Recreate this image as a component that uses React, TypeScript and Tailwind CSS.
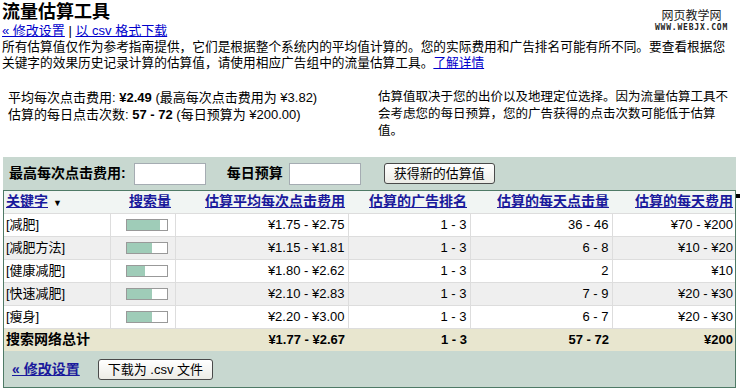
import React from "react";

const FONT = { fontFamily: '"Liberation Sans", "Noto Sans CJK SC", sans-serif' };

const ROWS = [
  { kw: "[减肥]", vol: 33, cpc: "¥1.75 - ¥2.75", pos: "1 - 3", clicks: "36 - 46", cost: "¥70 - ¥200" },
  { kw: "[减肥方法]", vol: 25, cpc: "¥1.15 - ¥1.81", pos: "1 - 3", clicks: "6 - 8", cost: "¥10 - ¥20" },
  { kw: "[健康减肥]", vol: 18, cpc: "¥1.80 - ¥2.62", pos: "1 - 3", clicks: "2", cost: "¥10" },
  { kw: "[快速减肥]", vol: 25, cpc: "¥2.10 - ¥2.83", pos: "1 - 3", clicks: "7 - 9", cost: "¥20 - ¥30" },
  { kw: "[瘦身]", vol: 25, cpc: "¥2.20 - ¥3.00", pos: "1 - 3", clicks: "6 - 7", cost: "¥20 - ¥30" },
];

function Btn({ children }: { children: React.ReactNode }) {
  return (
    <button className="h-[21px] px-[9px] rounded-[3px] border border-[#4a4a4a] bg-gradient-to-b from-white to-[#ecece6] text-[13px] leading-none text-black">
      {children}
    </button>
  );
}

export default function App() {
  return (
    <div className="relative w-[741px] h-[391px] bg-white text-black text-[13px] overflow-hidden px-[2px]" style={FONT}>
      {/* watermark */}
      <div className="absolute right-[13px] top-[9px] flex flex-col items-center">
        <div className="text-[12px] leading-[14px] text-[#222]">网页教学网</div>
        <div className="text-[8px] leading-[9px] font-bold tracking-[0.8px] text-[#222]" style={{ fontFamily: '"DejaVu Sans Mono", monospace' }}>
          WWW.WEBJX.COM
        </div>
      </div>

      <h1 className="mt-[1px] text-[18px] leading-[22px] font-bold">流量估算工具</h1>
      <div className="leading-[16px]">
        <a className="text-[#0000cc] underline">« 修改设置</a> | <a className="text-[#0000cc] underline">以 csv 格式下载</a>
      </div>
      <p className="leading-[16px] whitespace-nowrap text-[12.7px]">
        所有估算值仅作为参考指南提供，它们是根据整个系统内的平均值计算的。您的实际费用和广告排名可能有所不同。要查看根据您
        <br />
        关键字的效果历史记录计算的估算值，请使用相应广告组中的流量估算工具。<a className="text-[#0000cc] underline">了解详情</a>
      </p>

      <div className="mt-[18px] grid grid-cols-[376px_1fr] leading-[17px]">
        <div className="pl-[6px]">
          <div>
            平均每次点击费用: <b>¥2.49</b> (最高每次点击费用为 ¥3.82)
          </div>
          <div>
            估算的每日点击次数: <b>57 - 72</b> (每日预算为 ¥200.00)
          </div>
        </div>
        <div className="whitespace-nowrap text-[12.5px]">
          估算值取决于您的出价以及地理定位选择。因为流量估算工具不
          <br />
          会考虑您的每日预算，您的广告获得的点击次数可能低于估算
          <br />
          值。
        </div>
      </div>

      <div className="relative mt-[17px] ml-[1px] w-[733px] bg-[#c8d8d0]">
        <div className="absolute -right-[4px] top-[37px] w-[4px] h-[4px] bg-black" />
        <div className="h-[33px] flex items-center pl-[6px] font-bold text-[14px]">
          <span>最高每次点击费用:</span>
          <input className="ml-[8px] w-[72px] h-[22px] bg-white border border-[#a5acb2]" />
          <span className="ml-[21px]">每日预算</span>
          <input className="ml-[6px] w-[72px] h-[22px] bg-white border border-[#a5acb2]" />
          <span className="ml-[23px] font-normal">
            <Btn>获得新的估算值</Btn>
          </span>
        </div>
        <div className="border border-[#4f7a66]">
          <table className="w-full border-collapse">
            <thead>
              <tr className="h-[22px] bg-[#f1f5f3] text-[14px] font-bold text-[#1a1a9c]">
                <th className="px-[2px] text-left w-[106px] font-bold">
                  <span className="underline">关键字</span>
                  <span className="ml-[5px] text-[9px] text-black no-underline">▼</span>
                </th>
                <th className="px-[4px] text-right w-[65px] underline">搜索量</th>
                <th className="px-[3px] text-right w-[173px] underline">估算平均每次点击费用</th>
                <th className="px-[3px] text-right w-[122px] underline">估算的广告排名</th>
                <th className="px-[3px] text-right w-[142px] underline">估算的每天点击量</th>
                <th className="px-[2px] text-right underline">估算的每天费用</th>
              </tr>
            </thead>
            <tbody>
              {ROWS.map((r, i) => (
                <tr key={r.kw} className={`h-[23px] border-t border-[#dddddd] ${i % 2 === 1 ? "bg-[#efefef]" : "bg-white"}`}>
                  <td className="px-[2px] border-r border-[#dddddd]">{r.kw}</td>
                  <td className="px-[0px] border-r border-[#dddddd]">
                    <div className="ml-[15px] w-[42px] h-[12px] border border-[#999999] bg-white">
                      <div className="h-full bg-[#9fccb8]" style={{ width: r.vol }} />
                    </div>
                  </td>
                  <td className="px-[3px] text-right border-r border-[#dddddd]">{r.cpc}</td>
                  <td className="px-[3px] text-right border-r border-[#dddddd]">{r.pos}</td>
                  <td className="px-[3px] text-right border-r border-[#dddddd]">{r.clicks}</td>
                  <td className="px-[2px] text-right">{r.cost}</td>
                </tr>
              ))}
              <tr className="h-[23px] bg-[#e8e6cf] font-bold border-t border-[#dddddd]">
                <td className="px-[2px] text-[14px]" colSpan={2}>搜索网络总计</td>
                <td className="px-[3px] text-right">¥1.77 - ¥2.67</td>
                <td className="px-[3px] text-right">1 - 3</td>
                <td className="px-[3px] text-right">57 - 72</td>
                <td className="px-[2px] text-right">¥200</td>
              </tr>
            </tbody>
          </table>
          <div className="h-[36px] flex items-center pl-[8px]">
            <a className="text-[#1a1a9c] underline font-bold text-[14px]">« 修改设置</a>
            <span className="ml-[18px]">
              <Btn>下载为 .csv 文件</Btn>
            </span>
          </div>
        </div>
      </div>
    </div>
  );
}
